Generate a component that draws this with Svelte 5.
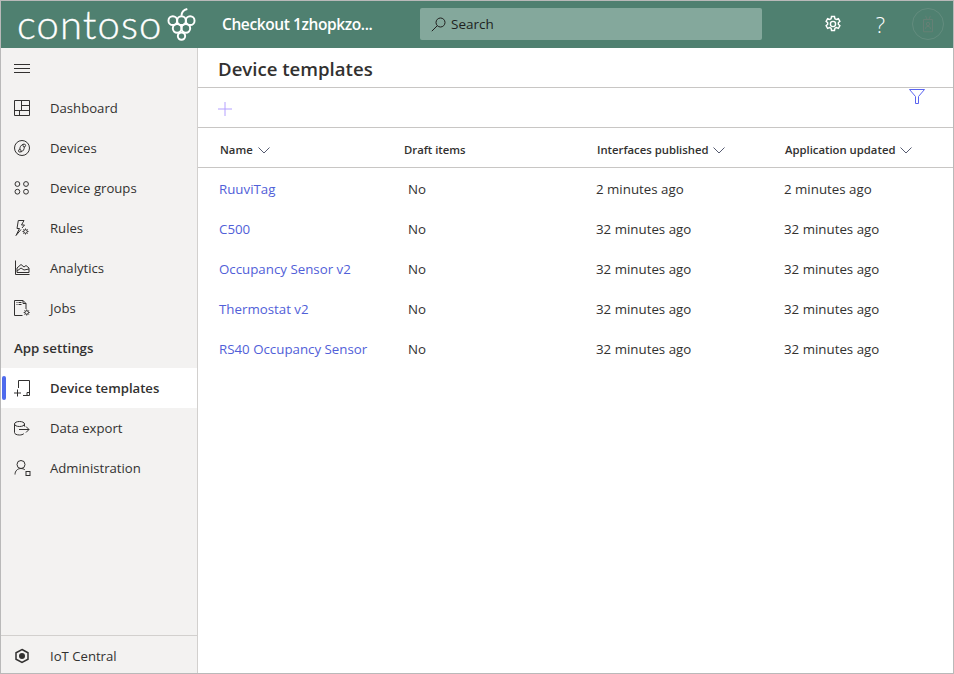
<script>
  const nav = [
    { label: 'Dashboard', icon: 'dash' },
    { label: 'Devices', icon: 'devices' },
    { label: 'Device groups', icon: 'groups' },
    { label: 'Rules', icon: 'rules' },
    { label: 'Analytics', icon: 'analytics' },
    { label: 'Jobs', icon: 'jobs' }
  ];
  const settings = [
    { label: 'Device templates', icon: 'templates', active: true },
    { label: 'Data export', icon: 'export' },
    { label: 'Administration', icon: 'admin' }
  ];
  const rows = [
    ['RuuviTag', 'No', '2 minutes ago', '2 minutes ago'],
    ['C500', 'No', '32 minutes ago', '32 minutes ago'],
    ['Occupancy Sensor v2', 'No', '32 minutes ago', '32 minutes ago'],
    ['Thermostat v2', 'No', '32 minutes ago', '32 minutes ago'],
    ['RS40 Occupancy Sensor', 'No', '32 minutes ago', '32 minutes ago']
  ];
</script>

{#snippet icon(name)}
  <svg class="ico" width="18" height="18" viewBox="0 0 18 18" fill="none" stroke="#323130" stroke-width="1">
    {#if name === 'dash'}
      <path d="M.5 1.500h15v15H.5zM7.500 1.500v10M7.500 6.500h8M.5 11.500h15M5.500 11.500v5" />
    {:else if name === 'devices'}
      <circle cx="8" cy="9" r="7.500" />
      <circle cx="5.800" cy="11.800" r="1.300" /><circle cx="10.300" cy="6.500" r="1.300" />
      <path d="M5.800 10.500c0-2.500.8-4.200 3.700-5.500M10.300 7.800c0 2.500-.8 4.200-3.500 5.200" />
    {:else if name === 'groups'}
      <circle cx="3.400" cy="5" r="2.400" /><circle cx="12" cy="5" r="2.400" /><circle cx="3.400" cy="12.700" r="2.400" /><circle cx="12" cy="12.700" r="2.400" />
    {:else if name === 'rules'}
      <path d="M3 9.500 4.300 1.500H10L7.500 6H10.500L8 9M3 9.500H5.500L2 16.500 7 10.500" /><circle cx="11.500" cy="12.500" r="1.800" /><path d="M11.500 9.500v1.200M11.500 14.300v1.200M8.500 12.500h1.200M13.300 12.500h1.200M9.400 10.400l.8.8M12.800 13.800l.8.8M9.400 14.600l.8-.8M12.800 11.200l.8-.8" />
    {:else if name === 'analytics'}
      <path d="M1.500 1.500V15.500H15.500M3 13.500V9L7 5.500 10 8 12 6.500 15 9V13.500ZM3 12 7 9 10 11 15 10" />
    {:else if name === 'jobs'}
      <path d="M8.500 16.500H.5V1.500H9L12 4.500V10M9 1.500V4.500H12" /><path d="M2.500 3.500h1M4.500 3.500h3M2.500 5.500h1M4.500 5.500h3" /><circle cx="12.700" cy="13.500" r="1.800" /><path d="M12.700 10.500v1.200M12.700 15.300v1.200M9.700 13.500h1.200M14.500 13.500h1.200M10.600 11.400l.8.8M14 14.800l.8.8M10.600 15.600l.8-.8M14 12.200l.8-.8" />
    {:else if name === 'templates'}
      <path d="M4.500 9V1.500H15.500V16.500H9M0 14h7M3.500 10.500v7M13 16.500V13.500H15.500" />
    {:else if name === 'export'}
      <path d="M.5 5c0-1.500 2.200-2.500 5-2.500s5 1 5 2.500-2.200 2.500-5 2.500S.5 6.500.5 5ZM.5 5v8.500c0 1.500 2.200 2.500 5 2.500 1.800 0 3.500-.5 4.300-1.300M10.500 5V7.500M5 10.500H15M12 7.500l3 3-3 3" />
    {:else if name === 'admin'}
      <circle cx="7" cy="5.500" r="4" /><path d="M1 15.500c0-3.500 2.500-6 6-6 1.500 0 2.800.4 3.800 1.200" /><rect x="12" y="12.500" width="4" height="4" />
    {:else if name === 'iot'}
      <path d="M8 2.500 14 5.800V12.200L8 15.500 2 12.200V5.800Z" stroke-width="1.500" /><circle cx="8" cy="9" r="3" fill="#323130" stroke="none" />
    {/if}
  </svg>
{/snippet}

{#snippet chevron()}
  <svg class="chev" width="12" height="7" viewBox="0 0 12 7" fill="none" stroke="#555a70" stroke-width="1"><path d="M.5.500 6 6l5.500-5.500" /></svg>
{/snippet}

<div class="frame">
  <header class="top">
    <div class="logo">
      <span class="word">contoso</span>
      <svg width="29" height="33" viewBox="0 0 30 34" fill="none" stroke="#fff" stroke-width="2">
        <circle cx="6" cy="13" r="4.500" /><circle cx="15" cy="13" r="4.500" /><circle cx="24" cy="13" r="4.500" />
        <circle cx="10.500" cy="21" r="4.500" /><circle cx="19.500" cy="21" r="4.500" /><circle cx="15" cy="29" r="3.800" />
        <path d="M15 8c0-3 2-6 6-7" />
      </svg>
    </div>
    <div class="app-name">Checkout 1zhopkzo...</div>
    <div class="search">
      <svg width="15" height="15" viewBox="0 0 15 15" fill="none" stroke="#201f1e" stroke-width="1"><circle cx="9.500" cy="5.500" r="4.500" /><path d="M6.300 8.700.8 14.200" /></svg>
      <span>Search</span>
    </div>
    <div class="actions">
      <svg class="gear" width="18" height="18" viewBox="0 0 18 18" fill="none" stroke="#fff" stroke-width="1.400">
        <circle cx="9" cy="9" r="2.600" />
        <path d="M7.500 1.500h3l.4 2.200 1.500.8 2-.8 1.500 2.600-1.600 1.400v1.600l1.600 1.400-1.500 2.600-2-.8-1.500.8-.4 2.200h-3l-.4-2.200-1.500-.8-2 .8-1.500-2.600 1.600-1.400V7.700L2.100 6.300l1.500-2.600 2 .8 1.500-.8z" />
      </svg>
      <span class="help">?</span>
      <div class="avatar">
        <svg width="12" height="18" viewBox="0 0 14 22" fill="none" stroke="#6a7f76" stroke-width="1"><path d="M1.500 5.500h11v15h-11zM4 1l2 4.500M10 1 8 5.500" /><circle cx="7" cy="11" r="2" /><path d="M4 17c0-2 1-3 3-3s3 1 3 3" /></svg>
      </div>
    </div>
  </header>

  <div class="body">
    <nav class="side">
      <div class="item burger">
        <svg width="16" height="10" viewBox="0 0 16 10" stroke="#323130" stroke-width="1"><path d="M0 .5h16M0 4.500h16M0 8.500h16" /></svg>
      </div>
      {#each nav as n}
        <div class="item">{@render icon(n.icon)}<span>{n.label}</span></div>
      {/each}
      <div class="section">App settings</div>
      {#each settings as n}
        <div class="item" class:active={n.active}>{@render icon(n.icon)}<span>{n.label}</span></div>
      {/each}
      <div class="foot">
        <div class="item">{@render icon('iot')}<span>IoT Central</span></div>
      </div>
    </nav>

    <main class="main">
      <h1>Device templates</h1>
      <div class="toolbar">
        <svg width="14" height="14" viewBox="0 0 14 14" stroke="#b4a0ff" stroke-width="1"><path d="M7 0v14M0 7h14" /></svg>
        <svg class="filter" width="16" height="15" viewBox="0 0 16 15" fill="none" stroke="#5a64f0" stroke-width="1"><path d="M.5.500h15L9.500 7.500v7h-3v-7z" /></svg>
      </div>
      <div class="table">
        <div class="row head">
          <div class="c1">Name {@render chevron()}</div>
          <div class="c2">Draft items</div>
          <div class="c3">Interfaces published {@render chevron()}</div>
          <div class="c4">Application updated {@render chevron()}</div>
        </div>
        {#each rows as r}
          <div class="row">
            <a class="c1 link" href="#top">{r[0]}</a>
            <div class="c2 no">{r[1]}</div>
            <div class="c3">{r[2]}</div>
            <div class="c4">{r[3]}</div>
          </div>
        {/each}
      </div>
    </main>
  </div>
</div>

<style>
  :global(body) { margin: 0; background: #fff; }
  .frame {
    width: 954px; height: 674px; box-sizing: border-box;
    border: 1px solid #b9b9b9;
    display: flex; flex-direction: column;
    font-family: "Open Sans", "Noto Sans", sans-serif;
    font-size: 13.3px; color: #323130; overflow: hidden;
  }
  .top { height: 47px; box-sizing: border-box; padding-bottom: 1px; background: #4f8070; display: flex; align-items: center; color: #fff; flex: none; }
  .logo { width: 221px; display: flex; align-items: center; flex: none; padding-left: 16px; box-sizing: border-box; }
  .word { font-family: Lato, sans-serif; font-weight: 300; font-size: 40px; letter-spacing: 1.1px; line-height: 46px; -webkit-text-stroke: .3px #fff; }
  .logo svg { margin-left: 4px; }
  .app-name { width: 198px; font-weight: 600; font-size: 15.500px; letter-spacing: -.4px; flex: none; }
  .search {
    width: 342px; height: 32px; background: #84a89c; border-radius: 2px; flex: none;
    display: flex; align-items: center; gap: 5px; padding-left: 11px; box-sizing: border-box;
    color: #201f1e; font-size: 13.500px;
  }
  .actions { display: flex; align-items: center; margin-left: 62px; }
  .gear { display: block; }
  .help { font-size: 22px; margin-left: 33px; font-weight: 300; width: 11px; text-align: center; line-height: 30px; }
  .avatar {
    width: 32px; height: 32px; border-radius: 50%; border: 1px solid #638c7e; box-sizing: border-box;
    margin-left: 26px; display: flex; align-items: center; justify-content: center;
  }
  .body { flex: 1; display: flex; min-height: 0; }
  .side { width: 196px; flex: none; background: #f3f2f1; border-right: 1px solid #d2d0ce; display: flex; flex-direction: column; font-size: 13.150px; }
  .item { height: 40px; display: flex; align-items: center; padding-left: 13px; position: relative; flex: none; }
  .item > span { margin-left: 18px; }
  .ico { display: block; flex: none; }
  .burger { padding-top: 1px; box-sizing: border-box; }
  .section { height: 40px; line-height: 40px; padding-left: 13px; font-weight: 600; flex: none; font-size: 13.300px; }
  .active { background: #fff; font-weight: 600; }
  .active::before { content: ""; position: absolute; left: 1px; top: 8px; width: 4px; height: 24px; border-radius: 2px; background: #4f6bed; }
  .foot { margin-top: auto; border-top: 1px solid #d2d0ce; }
  .foot .item { height: 37px; box-sizing: border-box; padding-top: 3px; }
  .main { flex: 1; min-width: 0; background: #fff; }
  h1 { margin: 0; height: 39px; line-height: 41px; padding-left: 20px; font-size: 18.600px; font-weight: 600; border-bottom: 1px solid #c8c6c4; }
  .toolbar { height: 39px; border-bottom: 1px solid #c8c6c4; display: flex; justify-content: space-between; align-items: flex-start; padding: 0 28px 0 20px; }
  .toolbar > svg:first-child { margin-top: 14px; }
  .filter { margin-top: 1px; }
  .row { display: grid; grid-template-columns: 185px 192px 188px 1fr; height: 40px; box-sizing: border-box; padding-top: 2px; align-items: center; padding-left: 21px; }
  .head { border-bottom: 1px solid #c8c6c4; padding-top: 3px; font-size: 11.300px; font-weight: 600; }
  .head .c1 { padding-left: 1px; }
  .head .c3, .head .c4 { padding-left: 1px; }
  .chev { margin-left: 2px; vertical-align: 0; }
  .no { padding-left: 4px; }
  .link { color: #5160d8; text-decoration: none; }
</style>
